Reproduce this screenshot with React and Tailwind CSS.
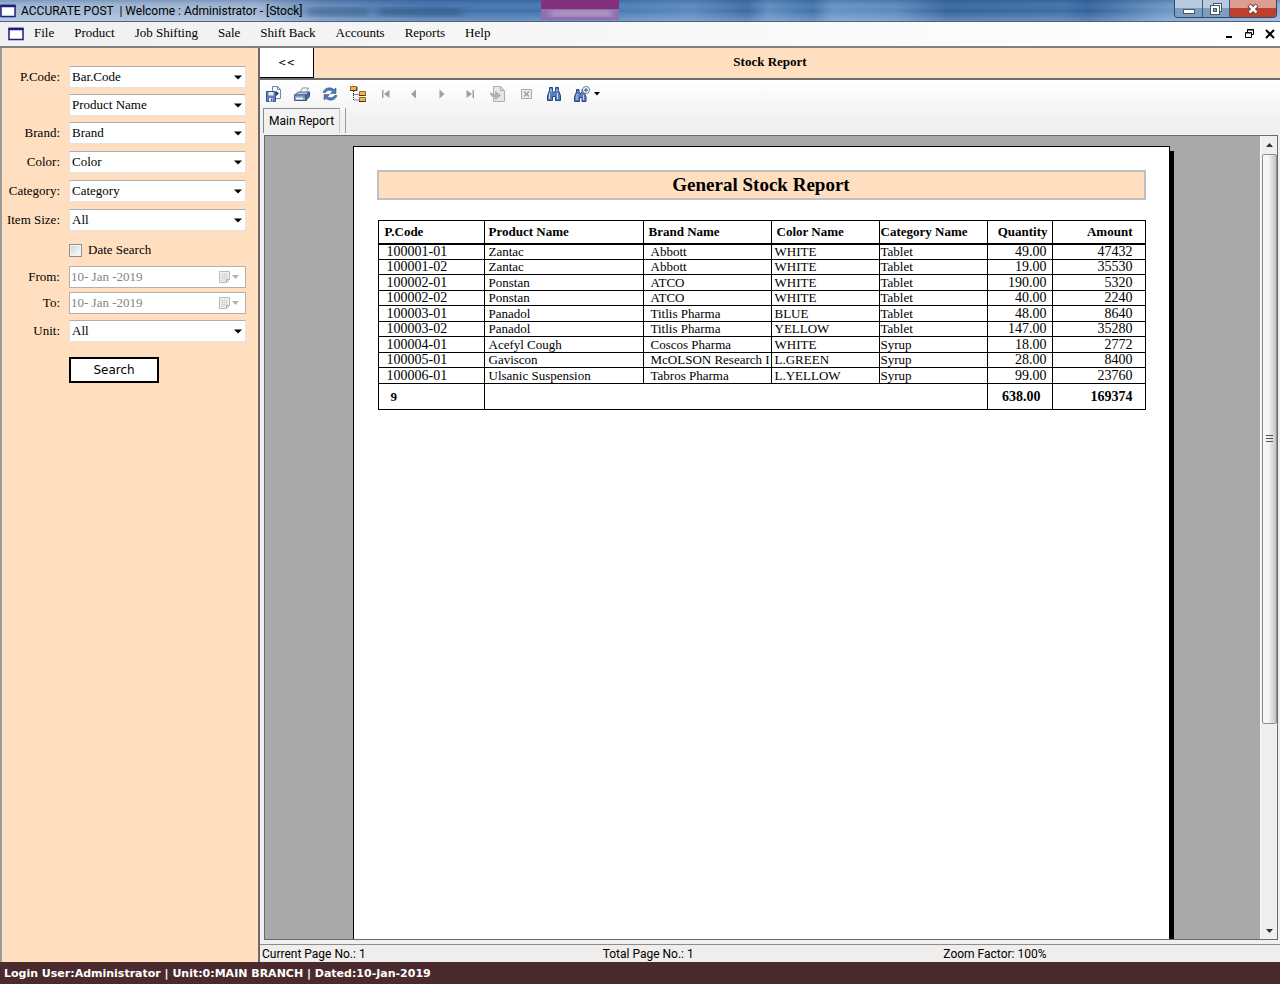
import { useState } from "react";

const menuItems = [
  "File",
  "Product",
  "Job Shifting",
  "Sale",
  "Shift Back",
  "Accounts",
  "Reports",
  "Help",
];

const stock = [
  ["100001-01", "Zantac", "Abbott", "WHITE", "Tablet", "49.00", "47432"],
  ["100001-02", "Zantac", "Abbott", "WHITE", "Tablet", "19.00", "35530"],
  ["100002-01", "Ponstan", "ATCO", "WHITE", "Tablet", "190.00", "5320"],
  ["100002-02", "Ponstan", "ATCO", "WHITE", "Tablet", "40.00", "2240"],
  ["100003-01", "Panadol", "Titlis Pharma", "BLUE", "Tablet", "48.00", "8640"],
  ["100003-02", "Panadol", "Titlis Pharma", "YELLOW", "Tablet", "147.00", "35280"],
  ["100004-01", "Acefyl Cough", "Coscos Pharma", "WHITE", "Syrup", "18.00", "2772"],
  ["100005-01", "Gaviscon", "McOLSON Research I", "L.GREEN", "Syrup", "28.00", "8400"],
  ["100006-01", "Ulsanic Suspension", "Tabros Pharma", "L.YELLOW", "Syrup", "99.00", "23760"],
];

function WindowIcon() {
  return (
    <svg width="16" height="14" viewBox="0 0 16 14" className="shrink-0">
      <rect x="1" y="1.5" width="14" height="11" fill="#fff" stroke="#1d1d86" strokeWidth="1.5" />
      <path d="M0.5 2h15" stroke="#1d1d86" strokeWidth="2.5" />
    </svg>
  );
}

function TitleBackdrop() {
  return (
    <svg
      className="absolute inset-0 w-full h-full"
      viewBox="0 0 1280 21"
      preserveAspectRatio="none"
      aria-hidden="true"
    >
      <defs>
        <linearGradient id="glass" x1="0" x2="1" y1="0" y2="0">
          <stop offset="0" stopColor="#a3b9d4" />
          <stop offset="0.2" stopColor="#a0b6d2" />
          <stop offset="0.25" stopColor="#6288b6" />
          <stop offset="0.33" stopColor="#3f6fa8" />
          <stop offset="0.45" stopColor="#4173ae" />
          <stop offset="0.54" stopColor="#5888bd" />
          <stop offset="0.584" stopColor="#3a6aa3" />
          <stop offset="0.6" stopColor="#5c8cc0" />
          <stop offset="0.635" stopColor="#4172ab" />
          <stop offset="0.65" stopColor="#6291c3" />
          <stop offset="0.7" stopColor="#5a88bc" />
          <stop offset="0.74" stopColor="#33639c" />
          <stop offset="0.83" stopColor="#3c6da6" />
          <stop offset="0.85" stopColor="#30609a" />
          <stop offset="0.91" stopColor="#6c95c4" />
          <stop offset="1" stopColor="#8fb0d4" />
        </linearGradient>
        <linearGradient id="sheen" x1="0" x2="0" y1="0" y2="1">
          <stop offset="0" stopColor="#1c4a86" stopOpacity="0.3" />
          <stop offset="0.5" stopColor="#fff" stopOpacity="0" />
          <stop offset="1" stopColor="#fff" stopOpacity="0.25" />
        </linearGradient>
        <filter id="soft">
          <feGaussianBlur stdDeviation="3" />
        </filter>
      </defs>
      <rect width="1280" height="21" fill="url(#glass)" />
      <rect width="1280" height="21" fill="url(#sheen)" />
      <g filter="url(#soft)">
        <rect x="308" y="8" width="60" height="8" fill="#33567f" opacity="0.5" />
        <rect x="378" y="8" width="84" height="8" fill="#2c507c" opacity="0.5" />
      </g>
      <rect x="541" y="0" width="78" height="9" fill="#84307c" />
      <rect x="541" y="9" width="78" height="11" fill="#9070ac" />
      <rect x="550" y="11" width="62" height="5" fill="#c3abd2" filter="url(#soft)" />
    </svg>
  );
}

function TitleBar() {
  return (
    <header className="relative flex h-[21px] shrink-0 items-center justify-between overflow-hidden">
      <TitleBackdrop />
      <div className="relative flex items-center gap-[5px]">
        <WindowIcon />
        <h1 className="whitespace-pre font-[Roboto,sans-serif] text-[12px] leading-[20px] text-black">
          ACCURATE POST  | Welcome : Administrator - [Stock]
        </h1>
      </div>
      <div className="relative mr-[3px] flex h-[18px] self-start overflow-hidden rounded-b border border-t-0 border-[#2f4a6b]">
        <button
          aria-label="Minimize"
          className="flex w-[28px] items-center justify-center border-r border-[#3d587a] bg-linear-to-b from-[#b9cbe0] from-50% to-[#7f9dbe] to-50%"
        >
          <svg width="14" height="14" viewBox="0 0 14 14">
            <rect x="1.5" y="7.5" width="11" height="4" fill="#fff" stroke="#4a5565" />
          </svg>
        </button>
        <button
          aria-label="Restore"
          className="flex w-[27px] items-center justify-center border-r border-[#3d587a] bg-linear-to-b from-[#b9cbe0] from-50% to-[#7f9dbe] to-50%"
        >
          <svg width="14" height="14" viewBox="0 0 14 14" fill="#fff" stroke="#4a5565">
            <rect x="4.5" y="1.5" width="8" height="8" />
            <rect x="1.5" y="3.5" width="9" height="9" />
            <rect x="4.5" y="6.5" width="3" height="3" fill="#8ba3bf" />
          </svg>
        </button>
        <button
          aria-label="Close"
          className="flex w-[46px] items-center justify-center bg-linear-to-b from-[#dd9e92] from-50% to-[#c0402c] to-50%"
        >
          <svg width="14" height="12" viewBox="0 0 14 12">
            <path d="M3 2l8 8M11 2l-8 8" stroke="#5a3a3c" strokeWidth="4.5" />
            <path d="M3.5 2.5l7 7M10.5 2.5l-7 7" stroke="#fff" strokeWidth="2.5" />
          </svg>
        </button>
      </div>
    </header>
  );
}

function MenuBar() {
  return (
    <nav className="flex h-[27px] shrink-0 items-center justify-between border-t border-b-2 border-t-[#47618a] border-b-[#808080] bg-linear-to-r from-[#f0f0f0] to-white pr-[5px] pl-2">
      <div className="flex items-center">
        <WindowIcon />
        <ul className="flex gap-[20px] pb-0.5 pl-[10px]">
          {menuItems.map((item) => (
            <li key={item}>
              <button className="block text-[13px] leading-[20px]">{item}</button>
            </li>
          ))}
        </ul>
      </div>
      <div className="flex items-center gap-[10px]">
        <button aria-label="Minimize child">
          <svg width="10" height="10" viewBox="0 0 10 10">
            <path d="M2 8h6" stroke="#000" strokeWidth="2" />
          </svg>
        </button>
        <button aria-label="Restore child">
          <svg width="11" height="10" viewBox="0 0 11 10" fill="none" stroke="#000">
            <path d="M3.5 3V.5h6v5H7.5M3 1h7M1 4h7" />
            <path d="M1.5 3.5h6v5h-6z" />
          </svg>
        </button>
        <button aria-label="Close child">
          <svg width="10" height="10" viewBox="0 0 10 10">
            <path d="M1 1l8 8M9 1L1 9" stroke="#000" strokeWidth="2" />
          </svg>
        </button>
      </div>
    </nav>
  );
}

function Field({ label, id, children }) {
  return (
    <div className="flex h-[22px] items-center gap-[9px]">
      <label htmlFor={id} className="w-[60px] shrink-0 text-right whitespace-nowrap">
        {label}
      </label>
      {children}
    </div>
  );
}

function Combo({ id, value, label }) {
  return (
    <div className="relative min-w-0 flex-1">
      <select
        id={id}
        aria-label={label}
        className="block h-[22px] w-full appearance-none border border-[#e3e3e3] border-t-[#abadb3] bg-white pl-0.5 leading-[18px]"
      >
        <option>{value}</option>
      </select>
      <svg
        className="pointer-events-none absolute top-[9px] right-1"
        width="8"
        height="5"
        viewBox="0 0 8 5"
      >
        <path d="M0 .5h8L4 4.5z" fill="#000" />
      </svg>
    </div>
  );
}

function DateBox({ id }) {
  return (
    <div className="flex h-[22px] min-w-0 flex-1 items-center border border-[#b5b2ae] bg-white pr-1.5">
      <input
        id={id}
        disabled
        defaultValue="10- Jan -2019"
        className="min-w-0 flex-1 pl-px text-[#848484]"
      />
      <svg width="20" height="14" viewBox="0 0 20 14" fill="none">
        <path d="M.5 1.5h10v8l-3 3h-7z" fill="#f1f1f1" stroke="#b9b9b9" />
        <path d="M2 4.5h7M2 6.5h7M2 8.5h7M2 10.5h5M3.5 3v8M5.5 3v8M7.5 3v7" stroke="#dadada" />
        <path d="M10.5 9.5h-3v3" stroke="#b0b0b0" />
        <path d="M13 5h7l-3.5 4z" fill="#b4b4b4" />
      </svg>
    </div>
  );
}

function Sidebar() {
  const [dateSearch, setDateSearch] = useState(false);

  return (
    <aside className="w-[260px] shrink-0 border-r-2 border-l-2 border-r-[#6b6b6b] border-l-[#9a9a96] bg-[#ffdfbf] pt-[18px] pr-3">
      <form className="-ml-0.5 text-[13px]" onSubmit={(e) => e.preventDefault()}>
        <div className="flex flex-col gap-1.5">
          <Field id="code" label="P.Code:">
            <Combo id="code" value="Bar.Code" />
          </Field>
          <Field>
            <Combo label="Product name" value="Product Name" />
          </Field>
          <Field id="brand" label="Brand:">
            <Combo id="brand" value="Brand" />
          </Field>
        </div>
        <div className="mt-[7px] flex flex-col gap-[7px]">
          <Field id="color" label="Color:">
            <Combo id="color" value="Color" />
          </Field>
          <Field id="category" label="Category:">
            <Combo id="category" value="Category" />
          </Field>
          <Field id="size" label="Item Size:">
            <Combo id="size" value="All" />
          </Field>
        </div>
        <label className="mt-[9px] mb-1.5 ml-[69px] flex h-[20px] items-center gap-1.5">
          <input
            type="checkbox"
            checked={dateSearch}
            onChange={(e) => setDateSearch(e.target.checked)}
            className="h-[13px] w-[13px] appearance-none border border-[#8e8f8f] bg-linear-to-br from-[#cdd1d6] to-white shadow-[inset_0_0_0_1px_#f4f4f4] checked:bg-[#3b5a8c]"
          />
          Date Search
        </label>
        <div className="flex flex-col gap-1">
          <Field id="from" label="From:">
            <DateBox id="from" />
          </Field>
          <Field id="to" label="To:">
            <DateBox id="to" />
          </Field>
        </div>
        <div className="mt-1.5">
          <Field id="unit" label="Unit:">
            <Combo id="unit" value="All" />
          </Field>
        </div>
        <button className="mt-[15px] ml-[69px] h-[26px] w-[90px] border-2 border-black bg-white font-['DejaVu_Sans',sans-serif] text-[12px]">
          Search
        </button>
      </form>
    </aside>
  );
}

const tools = [
  {
    name: "Export report",
    icon: (
      <>
        <path d="M6.500 .5h5l3 3v9h-8z" fill="#fff" stroke="#7288a8" />
        <path d="M11.5 .5v3h3" fill="none" stroke="#7288a8" />
        <path d="M10 5l3 2.5-3 2.5z" fill="#1f3f78" />
        <path d="M.5 5.5h9v10h-9z" fill="#5b7fb8" stroke="#35558c" />
        <path d="M2.5 6h5v3.5h-5zM3 12h4v3.5H3z" fill="#e8eef7" />
        <path d="M5 12.5h1.5V15H5z" fill="#35558c" />
      </>
    ),
  },
  {
    name: "Print report",
    icon: (
      <>
        <path d="M5.5 7l3-5h6l-2.5 5z" fill="#fff" stroke="#8090a8" />
        <path d="M.5 9l4-3h11l-3.5 3z" fill="#b7c6dc" stroke="#56698a" />
        <path d="M.5 9H12v5.5H.5z" fill="#8ba6cc" stroke="#3f5b8c" />
        <path d="M12 9l3.5-3v4.5L12 14.5z" fill="#4a6ba3" stroke="#2e4a7c" />
        <path d="M2 12.5h7" stroke="#fff" strokeWidth="1.5" />
        <path d="M9.5 10.5h1.5" stroke="#4fa03c" strokeWidth="1.5" />
      </>
    ),
  },
  {
    name: "Refresh",
    icon: (
      <>
        <path
          d="M1 6.5C2.5 1.5 8.5.5 12 3.500l2-1.5v5.5H8.5l2-2C8 3.5 5 4 3.5 6.5z"
          fill="#4f78b6"
          stroke="#274a86"
          strokeWidth=".5"
        />
        <path
          d="M15 9.5c-1.5 5-7.5 6-11 3L2 14V8.5h5.5l-2 2c2.5 2 5.500 1.5 7-1z"
          fill="#4f78b6"
          stroke="#274a86"
          strokeWidth=".5"
        />
      </>
    ),
  },
  {
    name: "Toggle group tree",
    icon: (
      <>
        <path d="M3.5 5v9H9M3.5 8.5H9" fill="none" stroke="#222" strokeDasharray="1 1" />
        <path d="M.5 .5h6v4h-6zM9.5 5.5h6v4h-6zM9.5 11.5h6v4h-6z" fill="#f0b04c" stroke="#9a6a22" />
        <path d="M.5 4.5h6.5V1M9 9.5h6.5M9 15.5h6.5" fill="none" stroke="#4a3212" />
      </>
    ),
  },
  {
    name: "First page",
    icon: <path d="M4 4h1.5v8H4zM11.5 4v8L6 8z" fill="#a0a0a0" />,
  },
  {
    name: "Previous page",
    icon: <path d="M10 3.5v9L5 8z" fill="#a0a0a0" />,
  },
  {
    name: "Next page",
    icon: <path d="M5.5 3.5v9l5-4.5z" fill="#a0a0a0" />,
  },
  {
    name: "Last page",
    icon: <path d="M4.5 4v8L10 8zM10.5 4H12v8h-1.5z" fill="#a0a0a0" />,
  },
  {
    name: "Go to page",
    icon: (
      <>
        <path d="M3.5 .5h7l4 4v11h-11z" fill="#e6e6e6" stroke="#adadad" />
        <path d="M10.5 .5v4h4" fill="none" stroke="#adadad" />
        <path
          d="M.5 7c0 3 2 4 5 4v2.500l5-4-5-4V8C3.5 8.5 2 8.5 2 7z"
          fill="#b4b4b4"
          stroke="#999"
          strokeWidth=".5"
        />
      </>
    ),
  },
  {
    name: "Close current view",
    icon: (
      <>
        <path d="M3.5 3.5h10v9h-10z" fill="#ededed" stroke="#a8a8a8" />
        <path d="M6 5.5l5 5M11 5.5l-5 5" stroke="#a0a0a0" strokeWidth="1.5" />
      </>
    ),
  },
  {
    name: "Find text",
    icon: (
      <>
        <path
          d="M3.5 1.5h3v3l1 2h1l1-2v-3h3v3l2 5v5h-5v-4h-3v4h-5v-5l2-5z"
          fill="#5a80bb"
          stroke="#26457e"
        />
        <path d="M3.5 7v6M11.5 7v6M5 3v3M11 3v2" stroke="#c5d5ec" />
      </>
    ),
  },
  {
    name: "Zoom",
    icon: (
      <>
        <path
          d="M2.5 3.5h2.5v2l1 2h1l1-2v-2h2v3l2 4v5H8v-4H5.5v4h-5v-5l2-4.5z"
          fill="#5a80bb"
          stroke="#26457e"
        />
        <path d="M3 8v6M9.5 9v5" stroke="#c5d5ec" />
        <circle cx="12" cy="4" r="3.5" fill="#fff" stroke="#64799c" />
        <path d="M10 4h4M12 2v4" stroke="#26457e" />
      </>
    ),
  },
];

function Toolbar() {
  return (
    <div className="flex h-[28px] shrink-0 items-center pl-1.5">
      <div className="flex gap-3">
        {tools.map((tool) => (
          <button key={tool.name} aria-label={tool.name}>
            <svg width="16" height="16" viewBox="0 0 16 16">
              {tool.icon}
            </svg>
          </button>
        ))}
      </div>
      <svg className="ml-1" width="6" height="4" viewBox="0 0 6 4">
        <path d="M0 0h6L3 3.5z" fill="#000" />
      </svg>
    </div>
  );
}

function ReportTable() {
  return (
    <table className="w-full table-fixed border-collapse border border-black text-[13px] leading-[14px]">
      <colgroup>
        <col className="w-[106px]" />
        <col className="w-[159px]" />
        <col className="w-[128px]" />
        <col className="w-[108px]" />
        <col className="w-[108px]" />
        <col className="w-[65px]" />
        <col />
      </colgroup>
      <thead>
        <tr className="h-[23px] border-b-2 border-black text-left whitespace-nowrap *:border-r *:border-black *:p-0">
          <th>
            <span className="pl-1.5">P.Code</span>
          </th>
          <th>
            <span className="pl-1">Product Name</span>
          </th>
          <th>
            <span className="pl-[5px]">Brand Name</span>
          </th>
          <th>
            <span className="pl-[5px]">Color Name</span>
          </th>
          <th>
            <span className="pl-px">Category Name</span>
          </th>
          <th className="text-right">
            <span className="pr-1">Quantity</span>
          </th>
          <th className="text-right">
            <span className="pr-3">Amount</span>
          </th>
        </tr>
      </thead>
      <tbody>
        {stock.map(([code, product, brand, color, category, qty, amount]) => (
          <tr
            key={code}
            className="border-b border-black whitespace-nowrap odd:h-[16px] even:h-[15px] *:overflow-hidden *:border-r *:border-black *:py-0 *:pr-0"
          >
            <td className="pl-2 text-[14px] leading-[14px]">{code}</td>
            <td className="pl-1">{product}</td>
            <td className="pl-[7px]">{brand}</td>
            <td className="pl-[3px]">{color}</td>
            <td className="pl-px">{category}</td>
            <td className="text-right text-[14px] leading-[14px]">
              <span className="pr-[5px]">{qty}</span>
            </td>
            <td className="text-right text-[14px] leading-[14px]">
              <span className="pr-3">{amount}</span>
            </td>
          </tr>
        ))}
      </tbody>
      <tfoot>
        <tr className="h-[26px] font-bold *:border-r *:border-black *:p-0">
          <td>
            <span className="pl-3">9</span>
          </td>
          <td colSpan={4}></td>
          <td className="text-right text-[14px]">
            <span className="pr-[11px]">638.00</span>
          </td>
          <td className="text-right text-[14px]">
            <span className="pr-3">169374</span>
          </td>
        </tr>
      </tfoot>
    </table>
  );
}

function Scrollbar() {
  return (
    <div className="flex w-[17px] shrink-0 flex-col items-center border-l border-[#fafafa] bg-[#efefef]">
      <button
        aria-label="Scroll up"
        className="flex h-[18px] w-full shrink-0 items-center justify-center"
      >
        <svg width="7" height="4" viewBox="0 0 7 4">
          <path d="M0 4h7L3.5 0z" fill="#333" />
        </svg>
      </button>
      <div className="flex w-[15px] basis-[570px] items-center justify-center rounded-xs border border-[#8f8f8f] bg-linear-to-r from-[#f6f6f6] from-40% to-[#c4c4cc]">
        <svg width="7" height="8" viewBox="0 0 7 8">
          <path d="M0 .5h7M0 3.5h7M0 6.5h7" stroke="#555" />
        </svg>
      </div>
      <button
        aria-label="Scroll down"
        className="mt-auto flex h-[17px] w-full shrink-0 items-center justify-center"
      >
        <svg width="7" height="4" viewBox="0 0 7 4">
          <path d="M0 0h7L3.5 4z" fill="#333" />
        </svg>
      </button>
    </div>
  );
}

function ReportViewer() {
  return (
    <section className="flex min-h-0 flex-1 flex-col bg-[#f0f0f0]">
      <div className="flex min-h-0 flex-1 flex-col bg-linear-to-b from-white to-[#f0f0f0] to-5%">
        <Toolbar />
        <div className="flex h-[25px] shrink-0 items-stretch gap-[5px] pl-[3px] font-[Roboto,sans-serif] text-[12px]">
          <button className="border-t border-r border-l border-[#8a8a8a] border-r-[#c8c8c8] px-[5px] leading-[20px] whitespace-nowrap">
            Main Report
          </button>
          <span className="border-l border-[#9c9c9c]"></span>
        </div>
        <div className="mt-0.5 mr-0.5 mb-1 ml-1 flex min-h-0 flex-1 border border-[#6a6a6a]">
          <div className="flex min-w-0 flex-1 justify-center overflow-hidden bg-[#a9a9a9] pt-[10px] pr-[3px]">
            <article className="h-[1056px] w-[817px] border border-black bg-white px-[23px] pt-[23px] shadow-[4px_5px_0_#000]">
              <h2 className="mb-5 border-2 border-[#c0c0c0] bg-[#ffdfbf] text-center text-[19px] leading-[26px] font-bold">
                General Stock Report
              </h2>
              <div className="pl-px">
                <ReportTable />
              </div>
            </article>
          </div>
          <Scrollbar />
        </div>
      </div>
      <div className="flex h-[18px] shrink-0 gap-1 overflow-hidden border-t border-[#8c8c8c] bg-[#f0eded] pl-0.5 font-[Roboto,sans-serif] text-[12px] leading-[19px]">
        <p className="flex-1">Current Page No.: 1</p>
        <p className="flex-1">Total Page No.: 1</p>
        <p className="flex-1">Zoom Factor: 100%</p>
      </div>
    </section>
  );
}

export default function App() {
  return (
    <div className="flex h-screen flex-col overflow-hidden bg-white font-['Liberation_Serif',serif] text-black">
      <TitleBar />
      <MenuBar />
      <main className="flex min-h-0 flex-1">
        <Sidebar />
        <div className="flex min-w-0 flex-1 flex-col">
          <div className="flex h-[32px] shrink-0 border-b-2 border-[#6b6b6b] bg-[#ffdfbf]">
            <button
              aria-label="Collapse filters"
              className="w-[54px] border-r border-b border-black bg-white font-['DejaVu_Sans',sans-serif] text-[10px]"
            >
              &lt;&lt;
            </button>
            <h2 className="flex-1 pt-0.5 pr-[54px] text-center text-[13px] leading-[24px] font-bold">
              Stock Report
            </h2>
          </div>
          <ReportViewer />
        </div>
      </main>
      <footer className="h-[22px] shrink-0 bg-[#4a2a2c] pl-1 font-['DejaVu_Sans',sans-serif] text-[11px] leading-[24px] font-bold text-white">
        Login User:Administrator | Unit:0:MAIN BRANCH | Dated:10-Jan-2019
      </footer>
    </div>
  );
}
